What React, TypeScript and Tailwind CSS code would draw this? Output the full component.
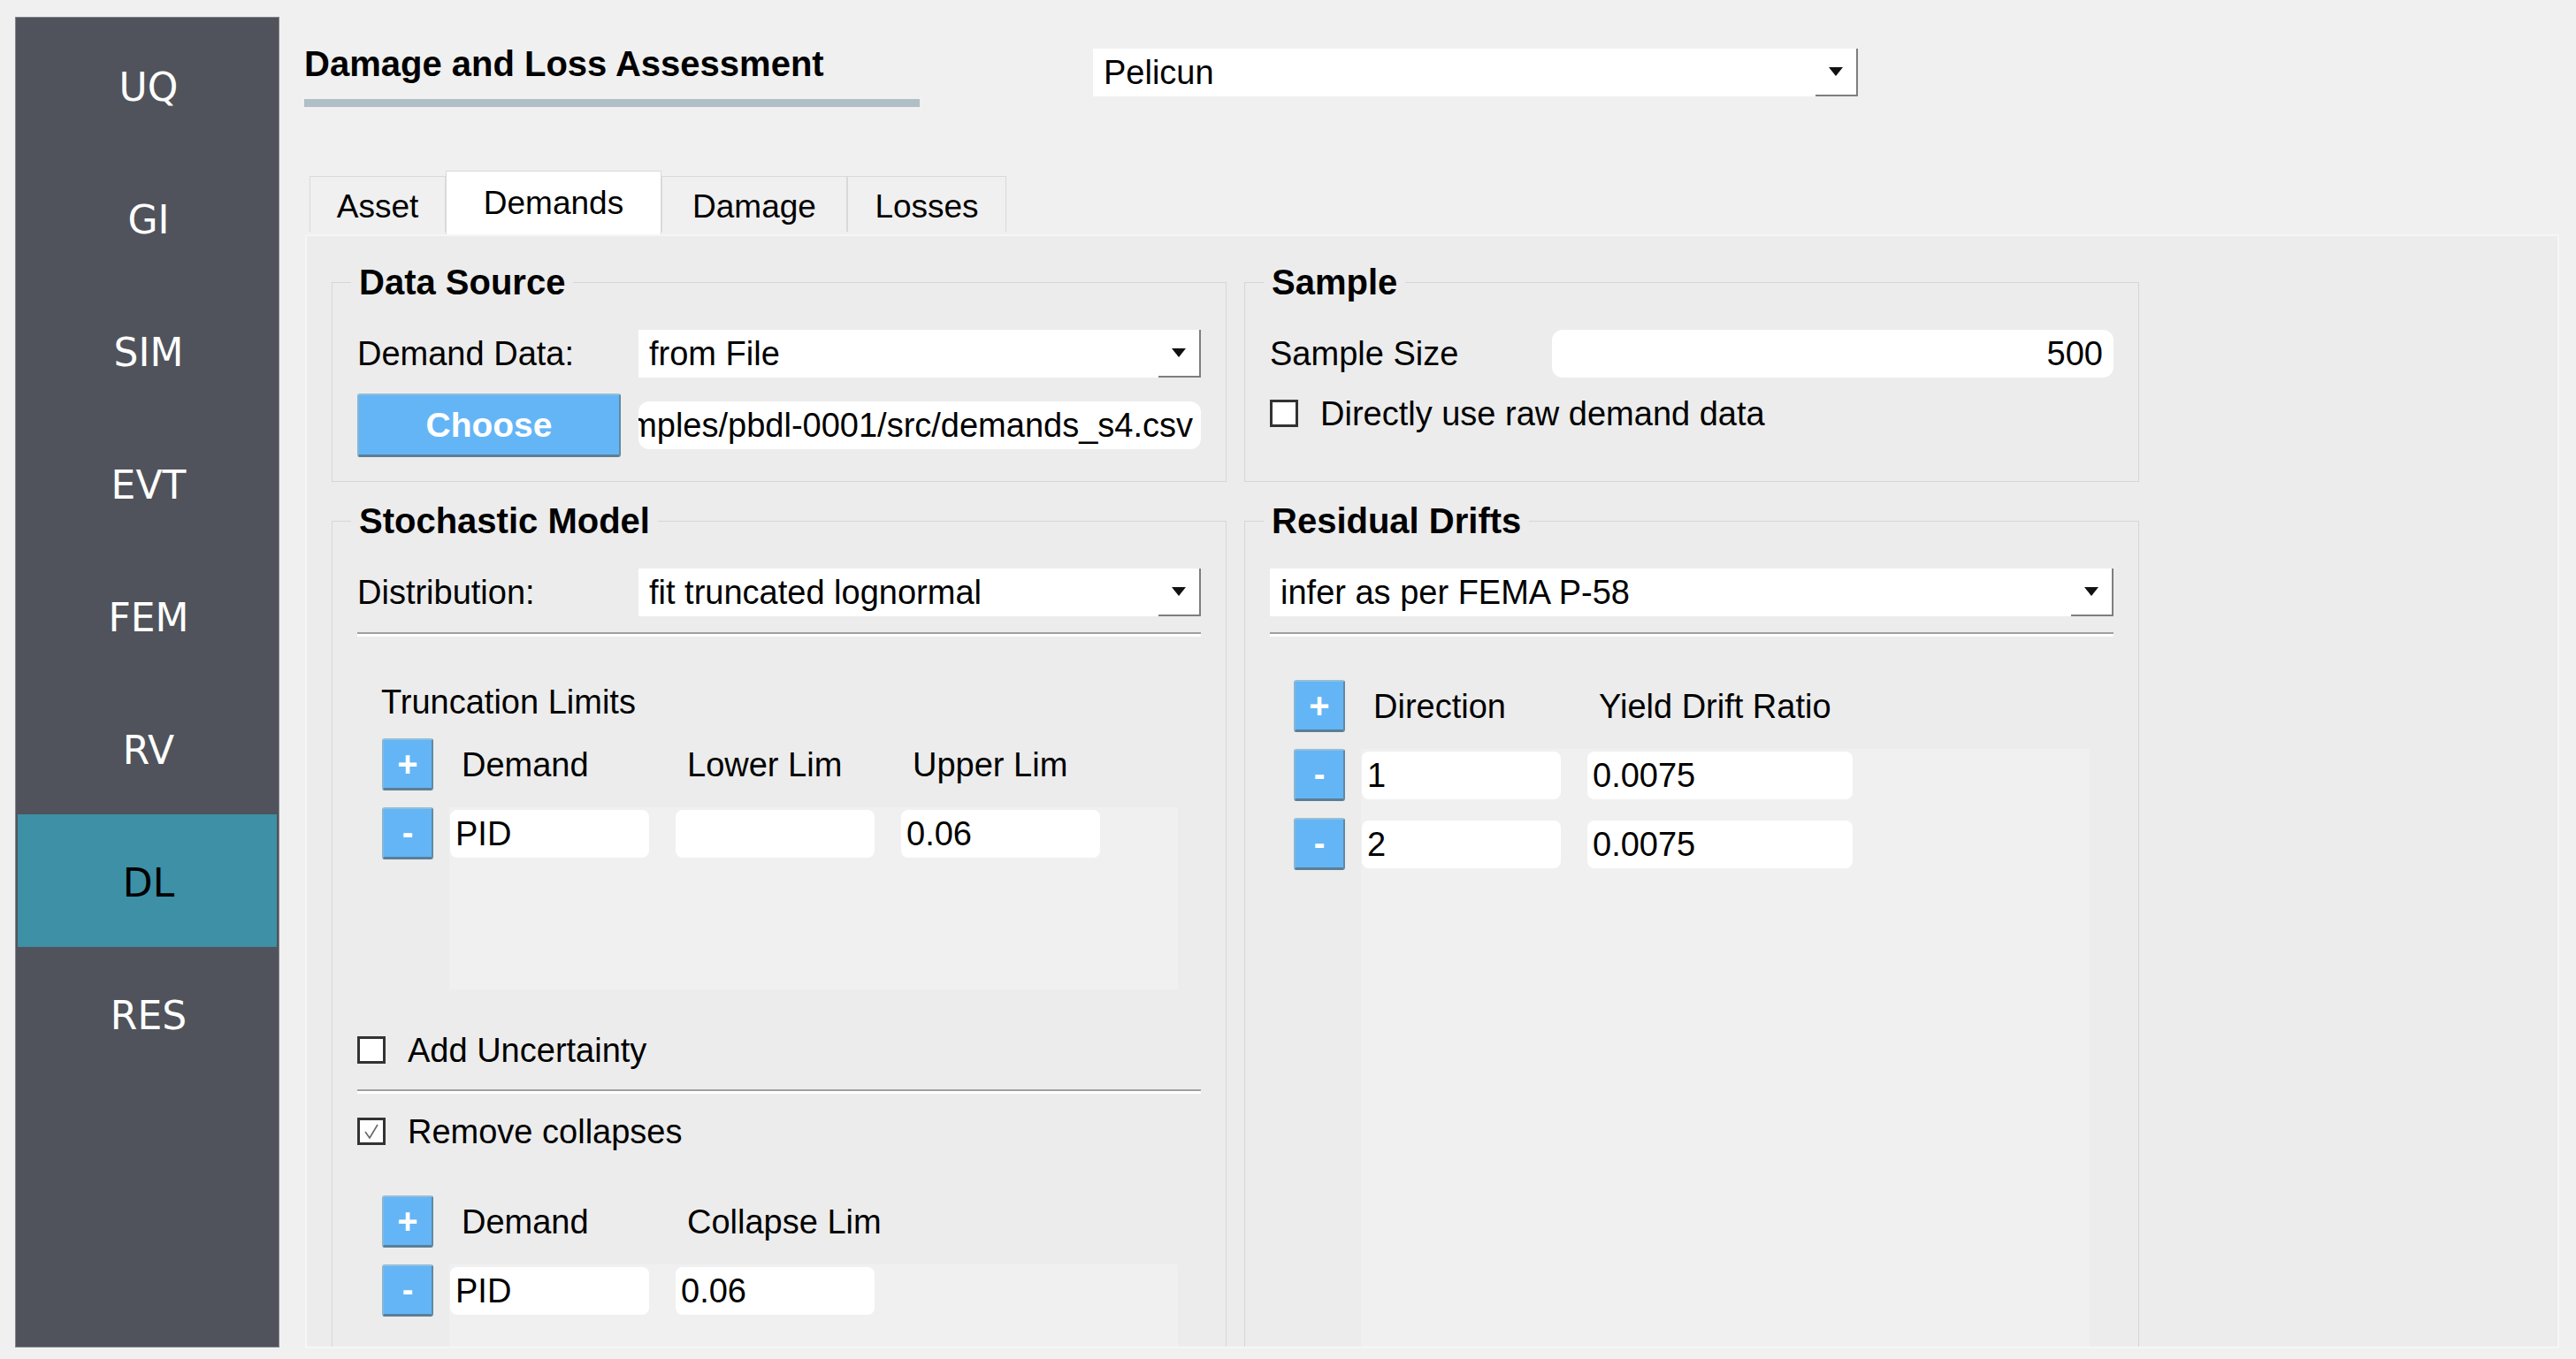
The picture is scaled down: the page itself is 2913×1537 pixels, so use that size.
import type { ReactNode } from 'react';

const navItems = ['UQ', 'GI', 'SIM', 'EVT', 'FEM', 'RV', 'DL', 'RES'];

const tabs = [
    { label: 'Asset', w: 'w-[154px]' },
    { label: 'Demands', w: 'w-[244px]', active: true },
    { label: 'Damage', w: 'w-[210px]' },
    { label: 'Losses', w: 'w-[180px]' },
];

interface Col {
    label: string;
    w: string;
}

function Arrow() {
    return (
        <svg width="16" height="10" viewBox="0 0 16 10">
            <polygon points="0,0 16,0 8,10" fill="#111" />
        </svg>
    );
}

function Combo({ value, className = '' }: { value: string; className?: string }) {
    return (
        <div className={`flex h-[54px] min-w-0 bg-white ${className}`}>
            <div className="flex min-w-0 flex-1 items-center overflow-hidden whitespace-nowrap pl-[12px]">{value}</div>
            <div className="flex w-[48px] shrink-0 items-center justify-center border-r-2 border-b-2 border-[#7e7e7e]">
                <Arrow />
            </div>
        </div>
    );
}

function Field({ value, className = '' }: { value?: string; className?: string }) {
    return <div className={`flex h-[54px] items-center rounded-[8px] bg-white px-[6px] whitespace-nowrap ${className}`}>{value}</div>;
}

function BlueBtn({ children, className = '' }: { children: ReactNode; className?: string }) {
    return (
        <div
            className={`flex items-center justify-center rounded-[3px] border-t-2 border-r-2 border-b-[3px] border-l-2 border-t-[#93bfd9] border-r-[#6289a0] border-b-[#5a7f96] border-l-[#86b6d4] bg-[#64b5f6] font-bold text-white ${className}`}
        >
            {children}
        </div>
    );
}

function Check({ label, checked = false, className = '' }: { label: string; checked?: boolean; className?: string }) {
    return (
        <div className={`flex h-[31px] items-center ${className}`}>
            <div className="flex h-[31px] w-[32px] items-center justify-center border-[3px] border-[#333] bg-white">
                {checked && (
                    <svg width="20" height="20" viewBox="0 0 20 20">
                        <polyline points="3,10 8,17 17,2" fill="none" stroke="#666" strokeWidth="1.6" />
                    </svg>
                )}
            </div>
            <span className="ml-[25px]">{label}</span>
        </div>
    );
}

function Separator({ className = '' }: { className?: string }) {
    return <div className={`h-[5px] border-t-2 border-[#a0a0a0] bg-white ${className}`} />;
}

function Table({ cols, rows, areaH, className = '' }: { cols: Col[]; rows: string[][]; areaH: string; className?: string }) {
    return (
        <div className={`flex flex-col ${className}`}>
            <div className="flex items-center">
                <BlueBtn className="h-[59px] w-[58px] text-[40px]">+</BlueBtn>
                <div className="ml-[19px] flex gap-[30px]">
                    {cols.map((c) => (
                        <div key={c.label} className={`${c.w} pl-[13px] whitespace-nowrap`}>
                            {c.label}
                        </div>
                    ))}
                </div>
            </div>
            <div className="mt-[19px] flex items-start">
                <div className="flex w-[58px] flex-col gap-[19px]">
                    {rows.map((_, i) => (
                        <BlueBtn key={i} className="h-[59px] w-[58px] text-[38px]">
                            -
                        </BlueBtn>
                    ))}
                </div>
                <div className={`ml-[18px] flex w-[824px] flex-col gap-[24px] bg-[#f0f0f0] pt-[3px] pl-[1px] ${areaH}`}>
                    {rows.map((r, i) => (
                        <div key={i} className="flex gap-[30px]">
                            {r.map((v, j) => (
                                <Field key={j} value={v} className={cols[j].w} />
                            ))}
                        </div>
                    ))}
                </div>
            </div>
        </div>
    );
}

function Group({ title, className = '', children }: { title: string; className?: string; children: ReactNode }) {
    return (
        <fieldset className={`w-[1012px] min-w-0 border border-[#d6d6d6] px-[28px] ${className}`}>
            <legend className="-ml-[7px] px-[9px] text-[40px] leading-[40px] font-bold">{title}</legend>
            <div className="flex min-w-0 flex-col">{children}</div>
        </fieldset>
    );
}

export default function App() {
    return (
        <div className="flex h-[1537px] w-[2913px] overflow-hidden bg-[#f0f0f0] font-['Liberation_Sans',Arial,sans-serif] text-[38px] leading-none text-black">
            <nav className="mt-[19px] ml-[17px] flex h-[1505px] w-[299px] flex-col border border-[#83858b] bg-[#50535b] px-[2px] pt-[1px] font-['DejaVu_Sans',sans-serif] text-[44px]">
                {navItems.map((item) => (
                    <div
                        key={item}
                        className={`flex h-[150px] shrink-0 items-center justify-center pt-[5px] pl-[3px] ${item === 'DL' ? 'bg-[#3d90a6] text-black' : 'text-white'}`}
                    >
                        {item}
                    </div>
                ))}
            </nav>

            <main className="ml-[29px] flex w-[2549px] flex-col">
                <div className="flex h-[193px] shrink-0 items-start">
                    <div className="-ml-[1px] w-[696px] pt-[52px]">
                        <div className="text-[40px] leading-[40px] font-bold whitespace-nowrap">Damage and Loss Assessment</div>
                        <div className="mt-[20px] h-[9px] bg-[#b0bec5]" />
                    </div>
                    <Combo value="Pelicun" className="mt-[55px] ml-[196px] h-[53px] w-[865px]" />
                </div>

                <div className="flex h-[72px] shrink-0 items-end pl-[5px] text-[37px]">
                    {tabs.map((t) =>
                        t.active ? (
                            <div key={t.label} className={`${t.w} flex h-[72px] items-center justify-center border border-b-0 border-[#d9d9d9] bg-white`}>
                                {t.label}
                            </div>
                        ) : (
                            <div
                                key={t.label}
                                className={`${t.w} mb-[3px] flex h-[63px] items-center justify-center border border-b-0 border-[#d9d9d9] bg-[#f0f0f0] pt-[4px]`}
                            >
                                {t.label}
                            </div>
                        ),
                    )}
                </div>

                <section className="h-[1260px] shrink-0 overflow-hidden border-2 border-[#f6f6f6] bg-[#ececec] pt-[32px] pl-[28px]">
                    <div className="grid grid-cols-[1012px_1012px] gap-x-[20px] gap-y-[24px]">
                        <Group title="Data Source" className="h-[246px]">
                            <div className="mt-[34px] flex h-[54px] items-center">
                                <span className="w-[318px] shrink-0">Demand Data:</span>
                                <Combo value="from File" className="flex-1" />
                            </div>
                            <div className="mt-[18px] flex h-[72px] min-w-0 items-center">
                                <BlueBtn className="h-[72px] w-[298px] shrink-0 text-[39px]">Choose</BlueBtn>
                                <div className="ml-[20px] flex h-[54px] min-w-0 flex-1 items-center justify-end overflow-hidden rounded-[12px] bg-white pr-[9px] whitespace-nowrap">
                                    <span className="shrink-0">examples/pbdl-0001/src/demands_s4.csv</span>
                                </div>
                            </div>
                        </Group>

                        <Group title="Sample" className="h-[246px]">
                            <div className="mt-[34px] flex h-[54px] items-center">
                                <span className="w-[319px] shrink-0">Sample Size</span>
                                <div className="flex h-[54px] flex-1 items-center justify-end rounded-[12px] bg-white pr-[12px]">500</div>
                            </div>
                            <Check label="Directly use raw demand data" className="mt-[25px]" />
                        </Group>

                        <Group title="Stochastic Model" className="h-[1000px]">
                            <div className="mt-[34px] flex h-[54px] items-center">
                                <span className="w-[318px] shrink-0">Distribution:</span>
                                <Combo value="fit truncated lognormal" className="flex-1" />
                            </div>
                            <Separator className="mt-[18px]" />
                            <div className="mt-[54px] ml-[27px] h-[40px] leading-[40px]">Truncation Limits</div>
                            <Table
                                className="mt-[21px] ml-[28px]"
                                areaH="h-[206px]"
                                cols={[
                                    { label: 'Demand', w: 'w-[225px]' },
                                    { label: 'Lower Lim', w: 'w-[225px]' },
                                    { label: 'Upper Lim', w: 'w-[225px]' },
                                ]}
                                rows={[['PID', '', '0.06']]}
                            />
                            <Check label="Add Uncertainty" className="mt-[53px]" />
                            <Separator className="mt-[29px]" />
                            <Check label="Remove collapses" checked className="mt-[27px]" />
                            <Table
                                className="mt-[57px] ml-[28px]"
                                areaH="h-[300px]"
                                cols={[
                                    { label: 'Demand', w: 'w-[225px]' },
                                    { label: 'Collapse Lim', w: 'w-[225px]' },
                                ]}
                                rows={[['PID', '0.06']]}
                            />
                        </Group>

                        <Group title="Residual Drifts" className="h-[1000px]">
                            <Combo value="infer as per FEMA P-58" className="mt-[34px]" />
                            <Separator className="mt-[18px]" />
                            <Table
                                className="mt-[49px] ml-[27px]"
                                areaH="h-[700px]"
                                cols={[
                                    { label: 'Direction', w: 'w-[225px]' },
                                    { label: 'Yield Drift Ratio', w: 'w-[300px]' },
                                ]}
                                rows={[
                                    ['1', '0.0075'],
                                    ['2', '0.0075'],
                                ]}
                            />
                        </Group>
                    </div>
                </section>
            </main>
        </div>
    );
}
